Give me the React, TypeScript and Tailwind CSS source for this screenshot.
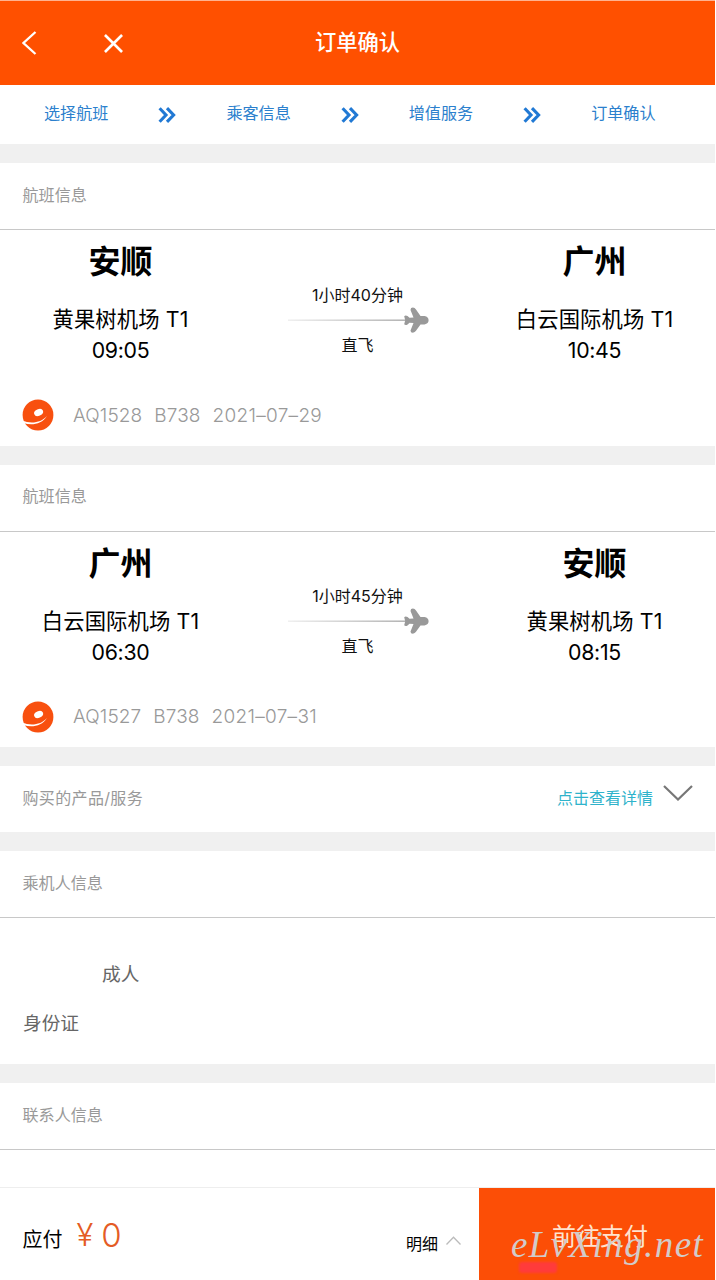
import { Fragment } from 'react'

// ── 航班数据 ──
const steps = ['选择航班', '乘客信息', '增值服务', '订单确认']

const flights = [
  {
    from: { city: '安顺', airport: '黄果树机场 T1', time: '09:05' },
    to: { city: '广州', airport: '白云国际机场 T1', time: '10:45' },
    duration: '1小时40分钟',
    no: 'AQ1528',
    plane: 'B738',
    date: '2021–07–29',
  },
  {
    from: { city: '广州', airport: '白云国际机场 T1', time: '06:30' },
    to: { city: '安顺', airport: '黄果树机场 T1', time: '08:15' },
    duration: '1小时45分钟',
    no: 'AQ1527',
    plane: 'B738',
    date: '2021–07–31',
  },
]

type Flight = (typeof flights)[number]

function Gap() {
  return <div className="h-[19px] shrink-0 bg-[#f0f0f0]" />
}

function SectionTitle({ title }: { title: string }) {
  return (
    <div className="flex h-[67px] shrink-0 items-center border-b border-[#c8c8c8] pl-[22.5px] pb-[2px] text-[16.1px] text-[#999]">
      {title}
    </div>
  )
}

function DoubleChevron() {
  return (
    <svg className="h-[16px] w-[18px]" viewBox="0 0 18 16" fill="none" stroke="#2179d4" strokeWidth="3.1">
      <path d="M1.6 1.2 8 8l-6.4 6.8M9 1.2 15.6 8 9 14.8" />
    </svg>
  )
}

function Place({ city, airport, time }: Flight['from']) {
  return (
    <div className="flex flex-1 flex-col items-center text-black">
      <div className="mt-[8px] h-[48px] text-[32px] font-bold leading-[48px]">{city}</div>
      <div className="mt-[18px] h-[31px] whitespace-nowrap text-[21.3px] leading-[31px] tracking-[0.15px]">{airport}</div>
      <div className="h-[31px] text-[21.3px] leading-[31px] tracking-[-0.3px]">{time}</div>
    </div>
  )
}

function AirlineLogo() {
  return (
    <svg className="h-[32px] w-[32px]" viewBox="0 0 32 32">
      <circle cx="16" cy="16" r="15.4" fill="#f8500f" />
      <ellipse cx="16.6" cy="13.4" rx="4.7" ry="3.3" transform="rotate(-24 16.6 13.4)" fill="#fff" />
      <path d="M0 21.500C9 25.200 19 23.800 25 17C20 24.800 10.500 27 1.800 24.200Z" fill="#fff" />
    </svg>
  )
}

function FlightCard({ flight }: { flight: Flight }) {
  return (
    <>
      <SectionTitle title="航班信息" />
      <div className="flex h-[155px] px-[2px]">
        <Place {...flight.from} />
        <div className="flex flex-1 flex-col items-center pt-[52.5px] text-[16px] leading-[24px] text-[#111]">
          <div>{flight.duration}</div>
          <svg className="h-[26px] w-[142px]" viewBox="0 0 142 26">
            <defs>
              <linearGradient id="route" x1="0" x2="1">
                <stop offset="0" stopColor="#eee" />
                <stop offset="1" stopColor="#aaa" />
              </linearGradient>
            </defs>
            <rect x="1" y="12.500" width="120" height="1.400" fill="url(#route)" />
            <path
              d="M117.200 9.200Q118.500 7.700 120.500 9L122.500 10.800 126.500 10.500 123.500 2.900Q123.500.6 125.900.6 127.900.8 128.800 2.300L133.500 9H137.500Q141.600 9.900 141.600 13.200 141.600 16.500 137.500 17.400H133.500L128.800 24.100Q127.900 25.500 125.900 25.700 123.500 25.700 123.500 23.500L126.500 16 122.500 15.700 120.500 17.500Q118.500 18.700 117.200 17.300L118.200 13.200Z"
              fill="#999"
            />
          </svg>
          <div>直飞</div>
        </div>
        <Place {...flight.to} />
      </div>
      <div className="flex h-[60.5px] items-center gap-[12px] pl-[22px] text-[19px] text-[#999]">
        <AirlineLogo />
        <div className="ml-[7px] flex gap-[12px] pt-[1px] font-light tracking-[0.1px]">
          <span>{flight.no}</span>
          <span>{flight.plane}</span>
          <span className="tracking-[0.3px]">{flight.date}</span>
        </div>
      </div>
    </>
  )
}

export default function App() {
  return (
    <div className="flex h-[1280px] w-[715px] flex-col overflow-hidden bg-white font-['Inter','Noto_Sans_CJK_SC',sans-serif]">

      {/* ── 顶部导航 ── */}
      <header className="grid h-[85px] shrink-0 grid-cols-3 items-center border-t border-[#ffb290] bg-[#ff5000] text-white">
        <div className="flex items-center gap-[67px] pl-[22px]">
          <svg className="h-[24px] w-[15px]" viewBox="0 0 15 24" fill="none" stroke="currentColor" strokeWidth="2.3">
            <path d="M13.500 1 1.500 12 13.500 23" />
          </svg>
          <svg className="h-[19px] w-[19px]" viewBox="0 0 20 20" fill="none" stroke="currentColor" strokeWidth="2.800">
            <path d="M1 1 19 19M19 1 1 19" />
          </svg>
        </div>
        <h1 className="pb-[1px] text-center text-[21.3px] font-medium">订单确认</h1>
      </header>

      {/* ── 步骤 ── */}
      <nav className="flex h-[59px] shrink-0 items-center justify-between pl-[44px] pr-[59.5px] text-[16.100px] text-[#2b80cd]">
        {steps.map((step, i) => (
          <Fragment key={step}>
            {i > 0 && <DoubleChevron />}
            <span className="pb-[2px]">{step}</span>
          </Fragment>
        ))}
      </nav>

      {/* ── 航班 ── */}
      {flights.map(flight => (
        <div key={flight.no} className="h-[301.500px] shrink-0">
          <Gap />
          <FlightCard flight={flight} />
        </div>
      ))}
      <Gap />

      {/* ── 产品/服务 ── */}
      <div className="flex h-[66px] shrink-0 items-center justify-between pl-[22.5px] pr-[22px] text-[16px] text-[#999]">
        <span className="pb-[2px] tracking-[0.35px]">购买的产品/服务</span>
        <div className="flex items-center gap-[10px] text-[#2fb3cb]">
          <span className="pb-[2px]">点击查看详情</span>
          <svg className="mb-[13px] h-[16px] w-[30px]" viewBox="0 0 30 16" fill="none" stroke="#777" strokeWidth="2.2">
            <path d="M1 1 15 14.500 29 1" />
          </svg>
        </div>
      </div>
      <Gap />

      {/* ── 乘机人 ── */}
      <SectionTitle title="乘机人信息" />
      <div className="h-[146px] shrink-0 pl-[23px] pt-[42.5px] text-[18.700px] leading-[28px] text-[#666]">
        <div className="pl-[79px]">成人</div>
        <div className="mt-[21px]">身份证</div>
      </div>
      <Gap />

      {/* ── 联系人 ── */}
      <SectionTitle title="联系人信息" />

      {/* ── 底部支付栏 ── */}
      <footer className="mt-auto flex h-[93px] shrink-0 border-t border-[#eee]">
        <div className="flex flex-1 items-start pl-[22.5px] pr-[18px]">
          <span className="mt-[38px] text-[20px] leading-[28px] text-black">应付</span>
          <span className="ml-[14px] mt-[28px] text-[31px] font-light leading-[38px] text-[#e45c25]">¥</span>
          <span className="ml-[8px] mt-[27px] text-[33px] font-light leading-[40px] text-[#e45c25]">0</span>
          <span className="ml-auto mt-[44px] text-[16px] leading-[24px] text-black">明细</span>
          <svg className="ml-[8px] mt-[48px] h-[9px] w-[15px]" viewBox="0 0 15 9" fill="none" stroke="#bbb" strokeWidth="1.300">
            <path d="M.5 8.500 7.500 1.200 14.500 8.500" />
          </svg>
        </div>
        <button className="relative w-[236px] bg-[#fc4e06] text-[24px] text-[#ffe3cf]">
          <span className="block pl-[6px] pt-[5px]">前往支付</span>
          {/* 角标水印 */}
          <span className="absolute left-[40px] top-[74px] h-[11px] w-[38px] rounded-[3px] bg-[#ff3b3b] blur-[1px]" />
          <span className="absolute left-[32px] top-[37px] font-['Liberation_Serif',cursive] text-[37px] font-normal italic leading-[40px] tracking-[1.4px] text-[#d2cbc9]">
            eLvXing.net
          </span>
        </button>
      </footer>
    </div>
  )
}
